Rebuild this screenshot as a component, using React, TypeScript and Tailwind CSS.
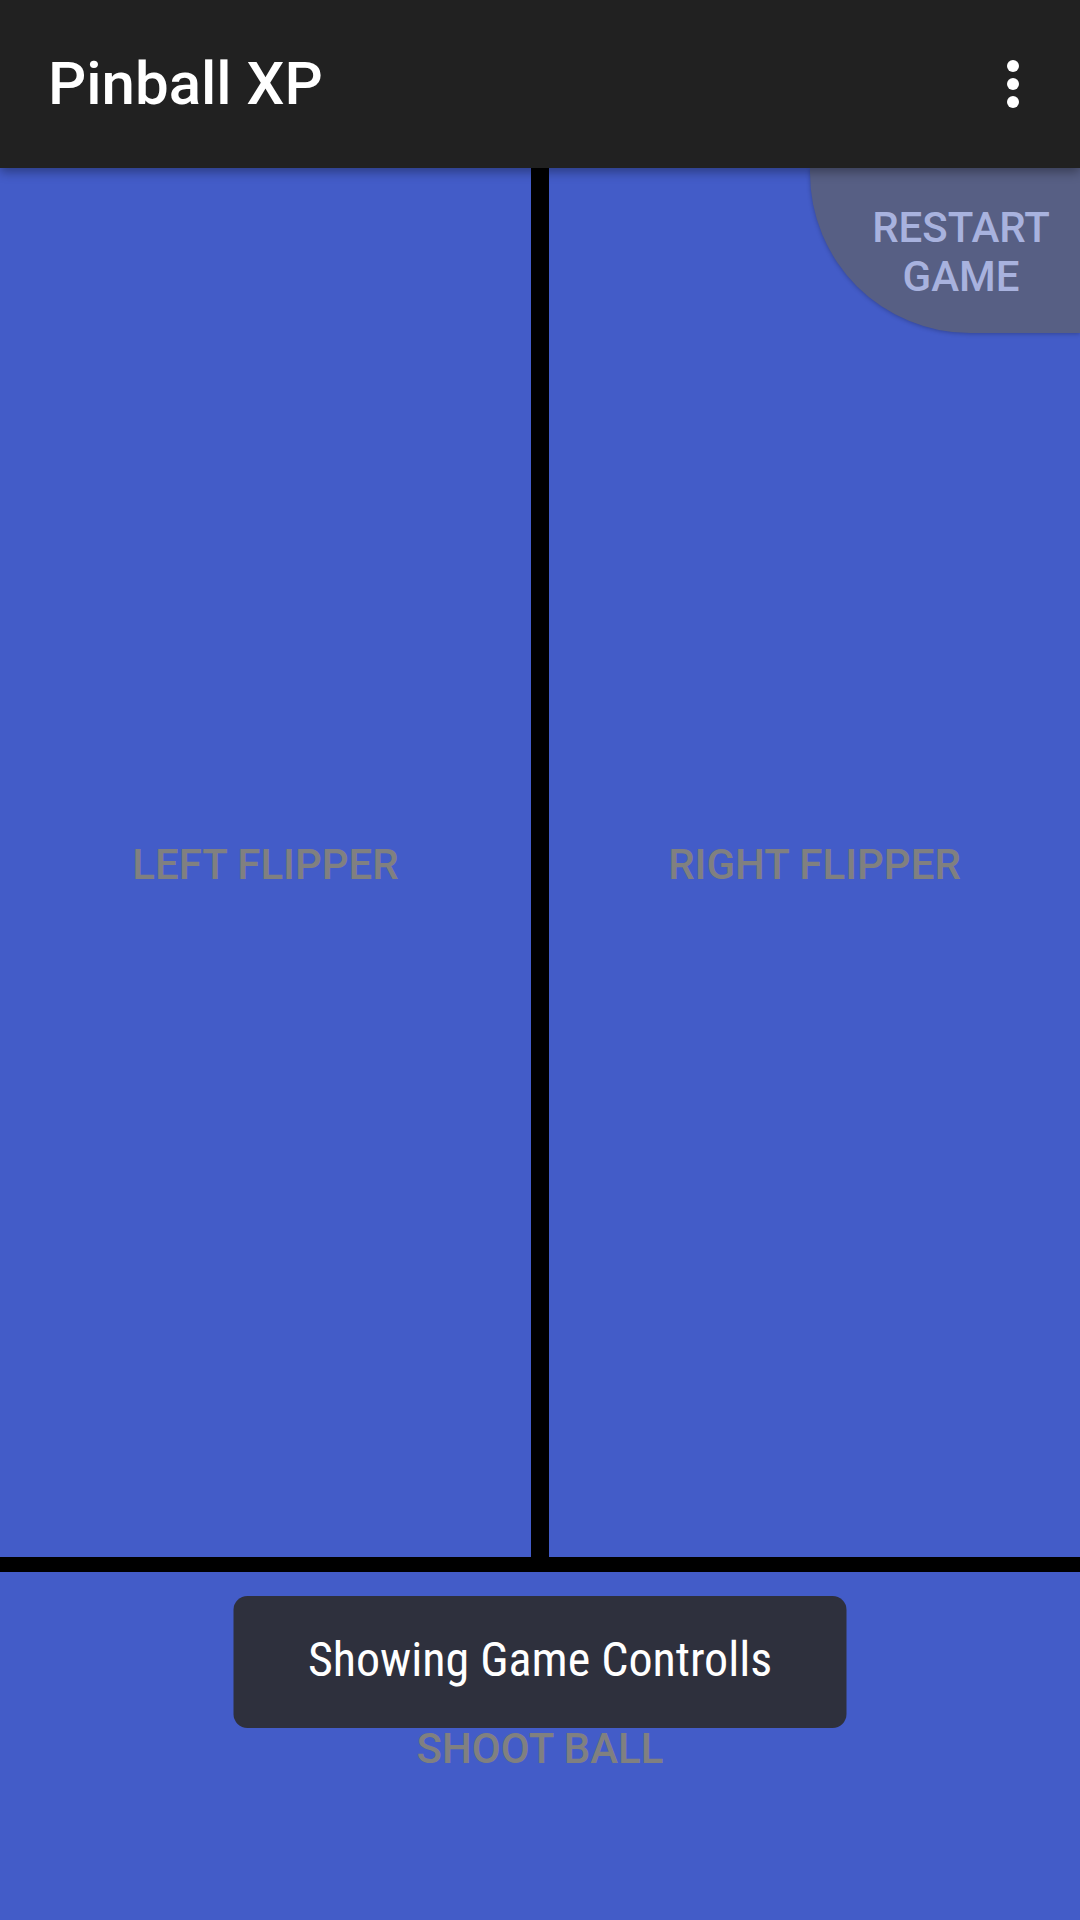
const Label = ({ children }: { children: React.ReactNode }) => (
    <span className="text-[42px] leading-[48px] font-medium text-[#808080] pt-[5px]">{children}</span>
);

const MoreIcon = () => (
    <svg width="72" height="72" viewBox="0 0 24 24" fill="#ffffff">
        <circle cx="12" cy="6" r="2" />
        <circle cx="12" cy="12" r="2" />
        <circle cx="12" cy="18" r="2" />
    </svg>
);

const App = () => {
    return (
        <div
            className="relative w-[1080px] h-[1920px] flex flex-col overflow-hidden bg-black"
            style={{ fontFamily: 'Roboto, "Noto Sans", sans-serif' }}
        >
            <header className="relative z-20 h-[168px] shrink-0 bg-[#212121] flex items-center justify-between pl-[48px] pr-[31px] shadow-[0_4px_10px_rgba(0,0,0,0.35)]">
                <h1 className="text-[60px] leading-none font-medium text-white">Pinball XP</h1>
                <MoreIcon />
            </header>

            <div className="flex-1 flex flex-col gap-[15px] bg-black">
                <div className="relative h-[1389px] flex gap-[18px]">
                    <div className="flex-1 bg-[#435CC8] flex items-center justify-center">
                        <Label>LEFT FLIPPER</Label>
                    </div>
                    <div className="flex-1 bg-[#435CC8] flex items-center justify-center">
                        <Label>RIGHT FLIPPER</Label>
                    </div>

                    {/* restart button sits over the right flipper */}
                    <div className="absolute top-0 right-0 w-[270px] h-[165px] rounded-bl-[160px] bg-[#575F84] shadow-[0_1px_4px_rgba(0,0,0,0.25)] flex items-center justify-center pl-[32px] pt-[3px]">
                        <span className="text-[42px] leading-[49px] font-medium text-[#A8B2DE] text-center">
                            RESTART
                            <br />
                            GAME
                        </span>
                    </div>
                </div>

                <div className="flex-1 bg-[#435CC8] flex items-center justify-center">
                    <Label>SHOOT BALL</Label>
                </div>
            </div>

            <div className="absolute z-30 left-1/2 -translate-x-1/2 bottom-[192px] w-[613px] h-[132px] rounded-[14px] bg-[#2E303D] flex items-center justify-center pb-[4px]">
                <span className="text-[48px] leading-none text-white [font-stretch:87.5%]">Showing Game Controlls</span>
            </div>
        </div>
    );
};

export default App;
